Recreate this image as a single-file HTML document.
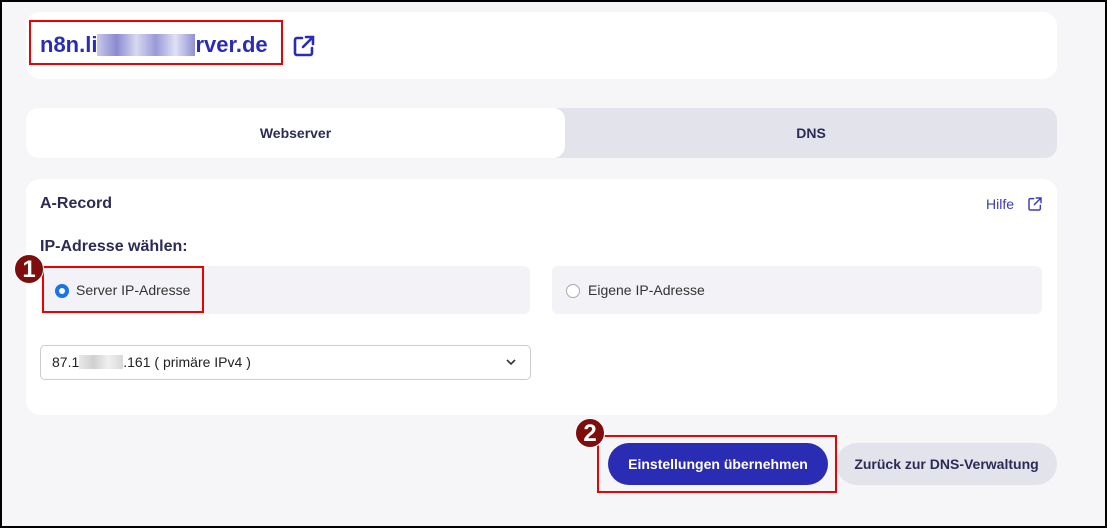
<!DOCTYPE html>
<html><head><meta charset="utf-8"><style>
*{box-sizing:border-box;margin:0;padding:0}
body{width:1107px;height:528px;background:#f6f6f9;font-family:"Liberation Sans",sans-serif;position:relative;overflow:hidden;border:2px solid #000;color:#2b2b55}
.a{position:absolute}
.card{background:#fff;border-radius:14px}
.red{border:2px solid #e00;position:absolute}
.badge{position:absolute;width:30px;height:30px;border-radius:50%;background:#7e0d0d;color:#fff;font-weight:bold;font-size:24px;text-align:center;line-height:30px;border:1px solid #fff}
</style></head><body>
<div class="a card" style="left:24px;top:10px;width:1031px;height:67px"></div>
<div class="a" style="left:38px;top:30px;font-size:22px;font-weight:bold;color:#2a2db3">n8n.li<span style="display:inline-block;width:98px;height:22px;vertical-align:-4px;background:linear-gradient(90deg,#c8c8ea,#8a8ad0,#d8d8f0,#9a9ad8,#e0e0f4,#9090d4)"></span>rver.de</div>
<svg class="a" style="left:290px;top:32px" width="24" height="24" viewBox="0 0 24 24" fill="none" stroke="#2a2db3" stroke-width="2.6" stroke-linecap="round"><path d="M10 4H5a2 2 0 0 0-2 2v13a2 2 0 0 0 2 2h13a2 2 0 0 0 2-2v-5M14 3h7v7M21 3 11 13"/></svg>
<div class="red" style="left:27px;top:18px;width:254px;height:45px"></div>

<div class="a" style="left:24px;top:106px;width:1031px;height:50px;border-radius:12px;background:#e3e3ec;overflow:hidden">
<div class="a" style="left:0;top:0;width:539px;height:50px;background:#fff;border-radius:12px"></div>
<div class="a" style="left:0;width:539px;top:17px;text-align:center;font-weight:bold;font-size:14px">Webserver</div>
<div class="a" style="left:539px;width:492px;top:17px;text-align:center;font-weight:bold;font-size:14px">DNS</div>
</div>

<div class="a card" style="left:24px;top:177px;width:1031px;height:236px"></div>
<div class="a" style="left:38px;top:193px;font-weight:bold;font-size:16px">A-Record</div>
<div class="a" style="left:984px;top:194px;font-size:14px;color:#3a3ac0">Hilfe</div>
<svg class="a" style="left:1025px;top:194px" width="16" height="16" viewBox="0 0 24 24" fill="none" stroke="#3a3ac0" stroke-width="2.2" stroke-linecap="round"><path d="M10 4H5a2 2 0 0 0-2 2v13a2 2 0 0 0 2 2h13a2 2 0 0 0 2-2v-5M14 3h7v7M21 3 11 13"/></svg>
<div class="a" style="left:38px;top:236px;font-weight:bold;font-size:16px">IP-Adresse wählen:</div>
<div class="a" style="left:40px;top:264px;width:488px;height:48px;background:#f3f3f7;border-radius:6px"></div>
<div class="a" style="left:550px;top:264px;width:490px;height:48px;background:#f3f3f7;border-radius:6px"></div>
<div class="a" style="left:53px;top:282px;width:14px;height:14px;border-radius:50%;border:4px solid #1a73e8;background:#fff"></div>
<div class="a" style="left:74px;top:280px;font-size:14px;color:#333">Server IP-Adresse</div>
<div class="a" style="left:564px;top:282px;width:14px;height:14px;border-radius:50%;border:1px solid #aaa;background:#fff"></div>
<div class="a" style="left:586px;top:280px;font-size:14px;color:#333">Eigene IP-Adresse</div>
<div class="red" style="left:40px;top:264px;width:162px;height:47px"></div>
<div class="badge" style="left:12px;top:252px">1</div>

<div class="a" style="left:38px;top:343px;width:491px;height:35px;border:1px solid #ccc;border-radius:5px;background:#fff"></div>
<div class="a" style="left:50px;top:352px;font-size:14px;color:#222">87.1<span style="display:inline-block;width:44px;height:14px;vertical-align:-2px;background:linear-gradient(90deg,#e8e8e8,#d0d0d0,#f0f0f0,#d8d8d8)"></span>.161 ( primäre IPv4 )</div>
<svg class="a" style="left:503px;top:354px" width="12" height="12" viewBox="0 0 12 12" fill="none" stroke="#333" stroke-width="1.6"><path d="M2 4l4 4 4-4"/></svg>

<div class="a" style="left:606px;top:441px;width:220px;height:42px;border-radius:21px;background:#2a2db3;color:#fff;font-weight:bold;font-size:14px;text-align:center;line-height:42px">Einstellungen übernehmen</div>
<div class="a" style="left:834px;top:441px;width:221px;height:42px;border-radius:21px;background:#e3e3ec;font-weight:bold;font-size:14px;text-align:center;line-height:42px">Zurück zur DNS-Verwaltung</div>
<div class="red" style="left:595px;top:433px;width:240px;height:58px"></div>
<div class="badge" style="left:573px;top:416px">2</div>
</body></html>
